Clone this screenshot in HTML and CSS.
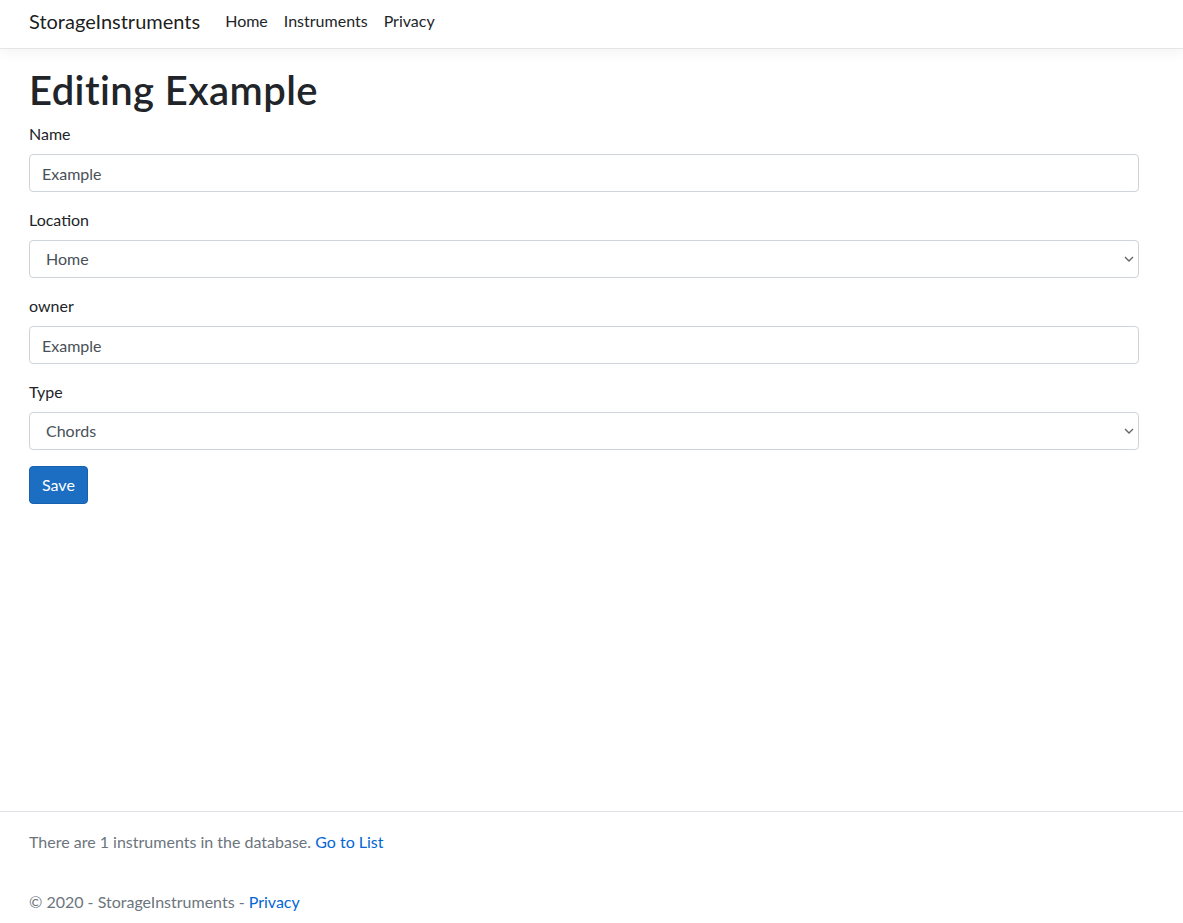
FILE: index.html
```html
<!DOCTYPE html>
<html lang="en">
<head>
<meta charset="utf-8">
<title>Editing Example - StorageInstruments</title>
<link rel="stylesheet" href="styles.css">
</head>
<body>
<header class="navbar">
  <div class="container nav-inner">
    <a class="brand" href="#">StorageInstruments</a>
    <nav class="nav-links">
      <a href="#">Home</a>
      <a href="#">Instruments</a>
      <a href="#">Privacy</a>
    </nav>
  </div>
</header>
<main class="main container">
  <h1 class="title">Editing Example</h1>
  <form class="form">
    <div class="form-group">
      <label class="label">Name</label>
      <input class="control" type="text" value="Example">
    </div>
    <div class="form-group">
      <label class="label">Location</label>
      <select class="control select"><option>Home</option></select>
    </div>
    <div class="form-group">
      <label class="label">owner</label>
      <input class="control" type="text" value="Example">
    </div>
    <div class="form-group">
      <label class="label">Type</label>
      <select class="control select"><option>Chords</option></select>
    </div>
    <button class="btn" type="button">Save</button>
  </form>
</main>
<footer class="footer">
  <div class="container">
    <div class="footer-line">There are 1 instruments in the database. <a href="#">Go to List</a></div>
    <div class="footer-line">&copy; 2020 - StorageInstruments - <a href="#">Privacy</a></div>
  </div>
</footer>
</body>
</html>
```
FILE: styles.css
```css
* { box-sizing: border-box; }
html, body { margin: 0; padding: 0; }
body {
  font-family: Lato, "Open Sans", "Liberation Sans", sans-serif;
  font-size: 16px;
  line-height: 1.5;
  color: #212529;
  background: #fff;
}
a { text-decoration: none; }
.container {
  width: 1140px;
  padding: 0 15px 0 29px;
}
.navbar {
  height: 49px;
  border-bottom: 1px solid #e5e5e5;
  box-shadow: 0 4px 12px rgba(0,0,0,.05);
  background: #fff;
}
.nav-inner {
  display: flex;
  align-items: center;
  height: 48px;
  padding-bottom: 6px;
}
.brand {
  font-size: 20px;
  color: rgba(0,0,0,.9);
  margin-right: 17px;
  line-height: 30px;
}
.nav-links { display: flex; }
.nav-links a {
  color: #212529;
  padding: 8px 8px;
  line-height: 24px;
}
.main {
  min-height: 762px;
  padding-top: 17px;
}
.title {
  margin: 0 0 8px;
  font-size: 40px;
  font-weight: 600;
  letter-spacing: 0.4px;
  line-height: 1.2;
}
.form-group { margin-bottom: 16px; }
.label {
  display: block;
  margin-bottom: 8px;
}
.control {
  display: block;
  width: 1110px;
  height: 38px;
  padding: 6px 12px;
  font-family: inherit;
  font-size: 16px;
  line-height: 1.5;
  color: #495057;
  background: #fff;
  border: 1px solid #ced4da;
  border-radius: 4px;
}
.select {
  appearance: none;
  -webkit-appearance: none;
  padding-left: 16px;
  background-image: url("data:image/svg+xml,%3Csvg xmlns='http://www.w3.org/2000/svg' width='10' height='6' viewBox='0 0 10 6'%3E%3Cpath d='M1 1l4 4 4-4' fill='none' stroke='%23666' stroke-width='1.4'/%3E%3C/svg%3E");
  background-repeat: no-repeat;
  background-position: right 4px center;
  background-size: 10px 6px;
}
.btn {
  display: inline-block;
  height: 38px;
  padding: 6px 12px;
  font-family: inherit;
  font-size: 16px;
  line-height: 1.5;
  color: #fff;
  background: #1b6ec2;
  border: 1px solid #1861ac;
  border-radius: 4px;
}
.footer {
  border-top: 1px solid #dee2e6;
  color: #6c757d;
}
.footer-line { line-height: 60px; }
.footer a { color: #0366d6; }
```
